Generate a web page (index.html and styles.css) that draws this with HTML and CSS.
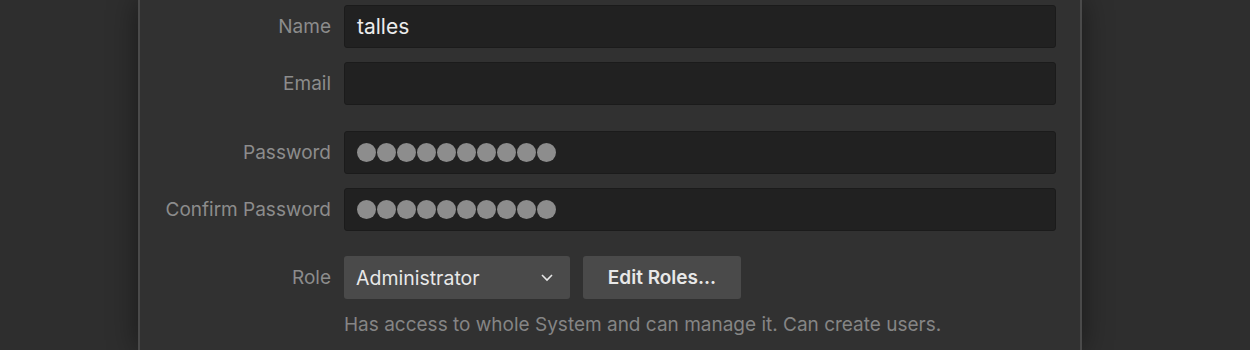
FILE: index.html
```html
<!DOCTYPE html>
<html lang="en">

<head>
    <meta charset="UTF-8">
    <meta name="viewport" content="width=device-width, initial-scale=1.0">
    <title>User</title>
    <link rel="stylesheet" href="styles.css">
</head>

<body>

    <!-- 用户编辑面板 -->
    <div class="panel">
        <form class="form">
            <label class="label">Name</label>
            <div class="field">talles</div>

            <label class="label">Email</label>
            <div class="field"></div>

            <!-- 密码部分, 上面多留一点空 -->
            <label class="label sep">Password</label>
            <div class="field dots sep">
                <span></span><span></span><span></span><span></span><span></span>
                <span></span><span></span><span></span><span></span><span></span>
            </div>

            <label class="label">Confirm Password</label>
            <div class="field dots">
                <span></span><span></span><span></span><span></span><span></span>
                <span></span><span></span><span></span><span></span><span></span>
            </div>

            <label class="label sep-role">Role</label>
            <div class="role-row sep-role">
                <div class="select">
                    Administrator
                    <svg class="chevron" width="14" height="9" viewBox="0 0 14 9">
                        <path d="M2 2 L7 7 L12 2" fill="none" stroke="#e6e6e6" stroke-width="1.6" />
                    </svg>
                </div>
                <div class="btn">Edit Roles...</div>
            </div>

            <div></div>
            <div class="help">Has access to whole System and can manage it. Can create users.</div>
        </form>
    </div>
</body>

</html>
```

FILE: styles.css
```css
* {
    margin: 0;
    padding: 0;
    box-sizing: border-box;
}

body {
    background-color: #2e2e2e;
    font-family: "Inter", "Roboto", sans-serif;
    font-size: 19px;
    height: 350px;
    overflow: hidden;
}

/* 面板 */
.panel {
    width: 944px;
    height: 350px;
    margin-left: 138px;
    padding: 5px 22px 0 0;
    background-color: #313131;
    border-left: 2px solid #4a4a4a;
    border-right: 2px solid #4a4a4a;
    box-shadow: 0 0 28px rgba(0, 0, 0, 0.45);
}

.form {
    display: grid;
    grid-template-columns: 191px 712px;
    column-gap: 13px;
    row-gap: 14px;
    align-items: center;
}

.sep {
    margin-top: 12px;
}

.sep-role {
    margin-top: 11px;
}

.label {
    text-align: right;
    color: #8c8c8c;
}

.field {
    height: 43px;
    background-color: #212121;
    border: 1px solid #1b1b1b;
    border-radius: 3px;
    padding: 0 12px;
    display: flex;
    align-items: center;
    color: #ececec;
    font-size: 21px;
}

.dots {
    gap: 1px;
}

.dots span {
    width: 19px;
    height: 19px;
    border-radius: 50%;
    background-color: #8d8d8d;
}

.role-row {
    display: flex;
    gap: 13px;
}

.select {
    width: 226px;
    height: 43px;
    background-color: #4a4a4a;
    border-radius: 3px;
    padding: 0 16px 0 12px;
    display: flex;
    align-items: center;
    justify-content: space-between;
    color: #e8e8e8;
    font-size: 19.5px;
}

.btn {
    width: 158px;
    height: 43px;
    background-color: #4a4a4a;
    border-radius: 3px;
    display: flex;
    align-items: center;
    justify-content: center;
    color: #e8e8e8;
    font-size: 19px;
    font-weight: 600;
}

.help {
    color: #858585;
}
```
